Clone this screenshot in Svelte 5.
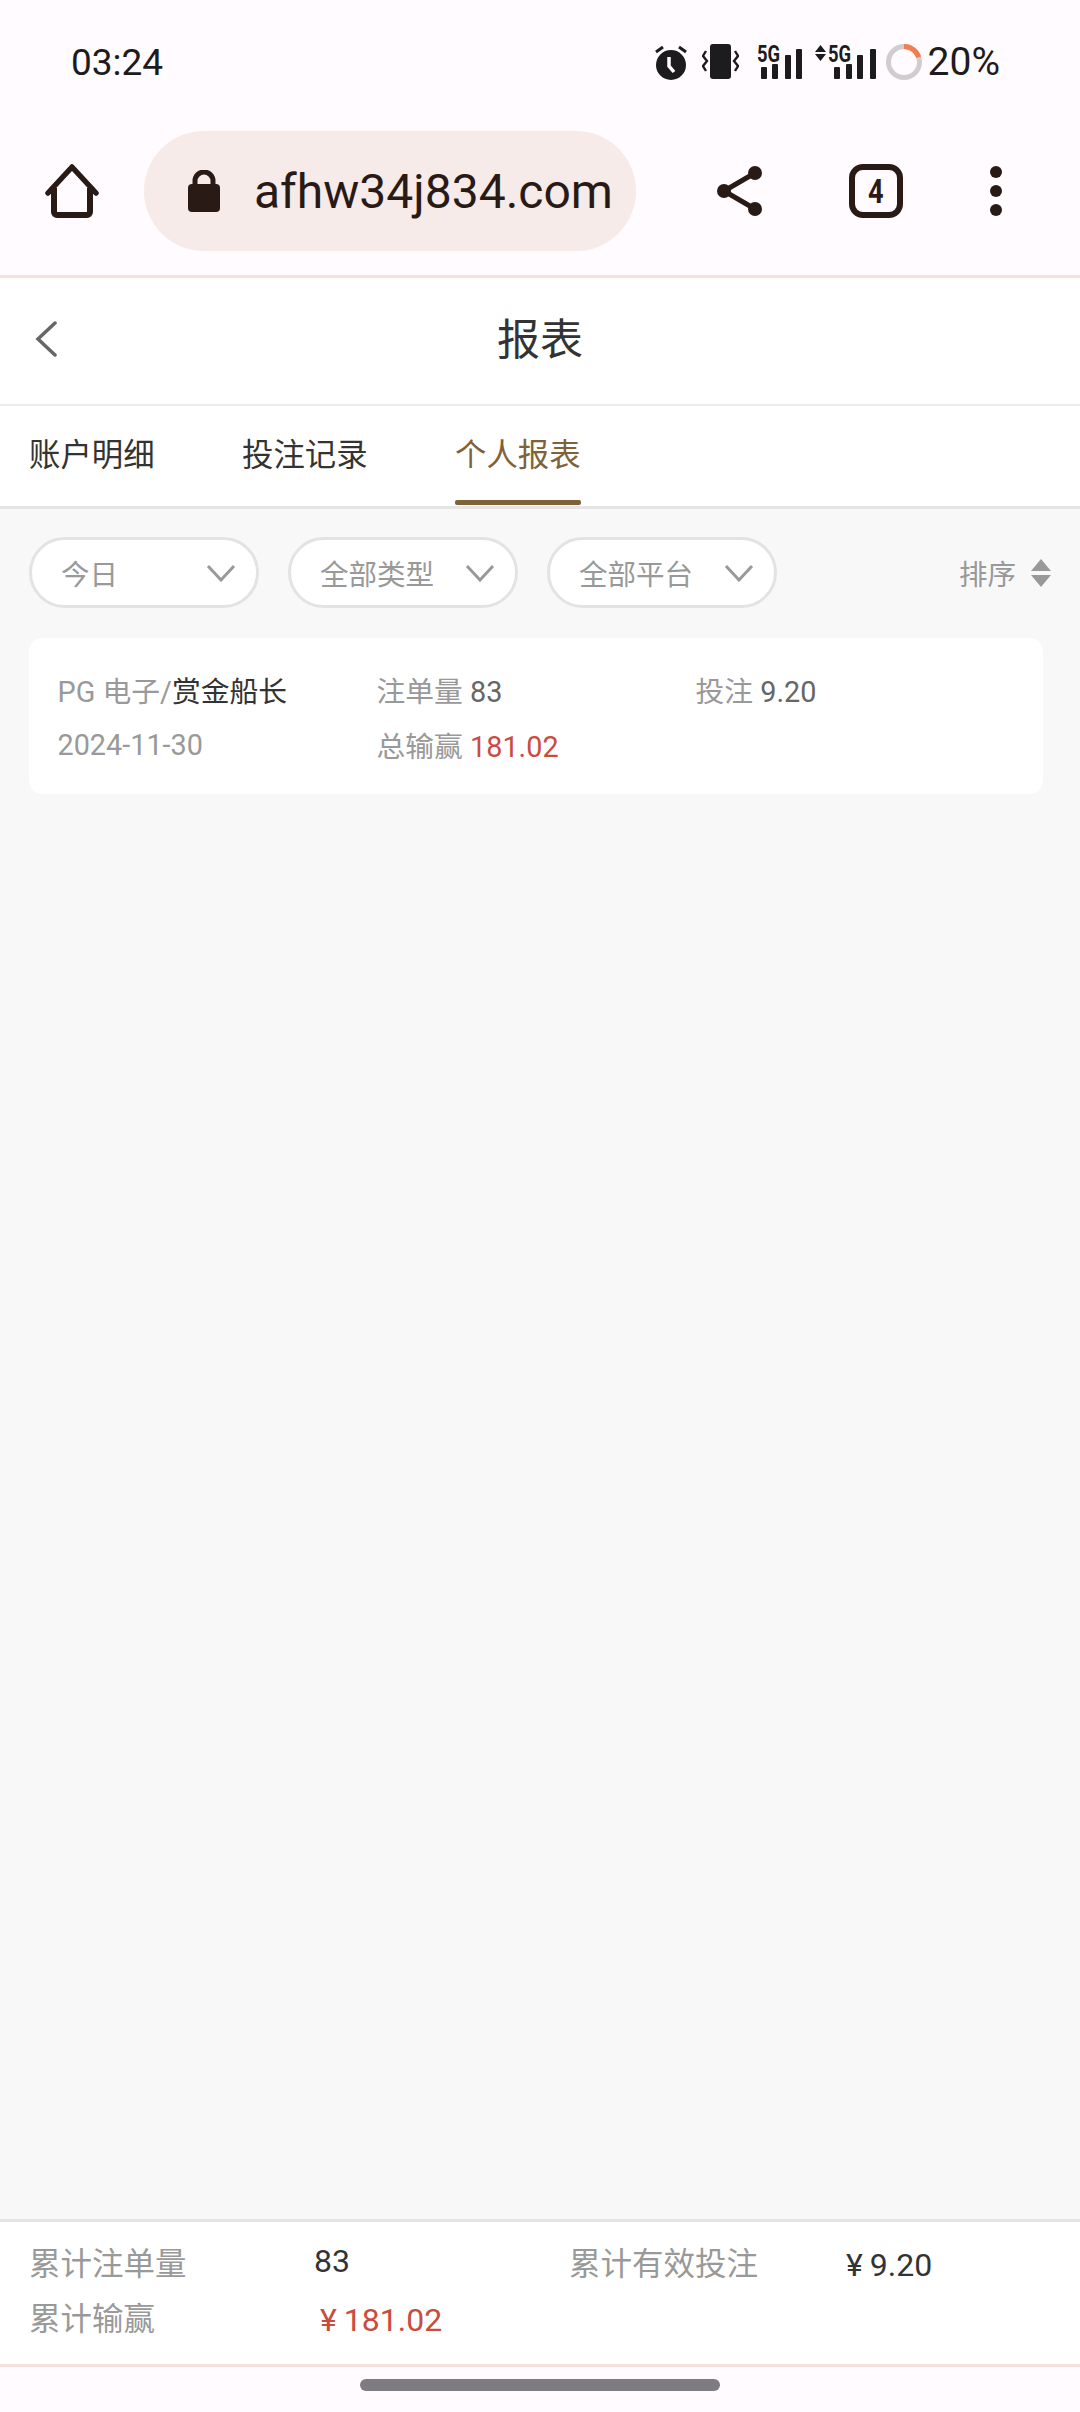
<script>
  const tabs = ["账户明细", "投注记录", "个人报表"];
  const filters = ["今日", "全部类型", "全部平台"];
</script>

<div class="page">
  <div class="chrome">
    <div class="status">
      <span class="time">03:24</span>
      <div class="status-icons">
        <svg class="alarm" width="34" height="36" viewBox="0 0 34 36">
          <circle cx="17" cy="21" r="15" fill="#1c1b1d" />
          <path d="M2 8 9 3M32 8 25 3" stroke="#1c1b1d" stroke-width="3" fill="none" />
          <path d="M15 13v9l5 6" stroke="#fffbfe" stroke-width="3.5" fill="none" />
        </svg>
        <svg class="vibrate" width="37" height="36" viewBox="0 0 37 36">
          <rect x="8" y="0" width="21" height="35" rx="3" fill="#1c1b1d" />
          <path d="M4 7 1 12l4 5-4 5 3 5M33 7l3 5-4 5 4 5-3 5" stroke="#1c1b1d" stroke-width="2.4" fill="none" />
        </svg>
        <div class="signal first">
          <span class="five-g">5G</span>
          <svg width="46" height="32" viewBox="0 0 46 32">
            <rect x="4" y="20" width="6" height="12" rx="1" fill="#1c1b1d" />
            <rect x="15" y="17" width="6" height="15" rx="1" fill="#1c1b1d" />
            <rect x="28" y="8" width="6" height="24" rx="1" fill="#1c1b1d" />
            <rect x="39" y="2" width="6" height="30" rx="1" fill="#1c1b1d" />
          </svg>
        </div>
        <div class="signal second">
          <svg class="updown" width="11" height="16" viewBox="0 0 11 16">
            <path d="M5.500 0 11 7H0zM0 9h11l-5.500 7z" fill="#1c1b1d" />
          </svg>
          <span class="five-g">5G</span>
          <svg width="46" height="32" viewBox="0 0 46 32">
            <rect x="4" y="20" width="6" height="12" rx="1" fill="#1c1b1d" />
            <rect x="16" y="17" width="6" height="15" rx="1" fill="#1c1b1d" />
            <rect x="27" y="8" width="6" height="24" rx="1" fill="#1c1b1d" />
            <rect x="40" y="2" width="6" height="30" rx="1" fill="#1c1b1d" />
          </svg>
        </div>
        <svg class="ring" width="36" height="36" viewBox="0 0 36 36">
          <circle cx="18" cy="18" r="15.500" fill="none" stroke="#cfcdcf" stroke-width="5" />
          <path d="M18 2.500A15.500 15.500 0 0 1 32.700 13.200" fill="none" stroke="#f47c50" stroke-width="5" />
        </svg>
        <span class="pct">20%</span>
      </div>
    </div>
    <div class="toolbar">
      <svg class="home" width="54" height="54" viewBox="0 0 54 54">
        <path d="M3 29 27 3l24 26" fill="none" stroke="#2a1a16" stroke-width="5.500" stroke-linecap="round" stroke-linejoin="round" />
        <path d="M9 24v24a3 3 0 0 0 3 3h30a3 3 0 0 0 3-3V24" fill="none" stroke="#2a1a16" stroke-width="6" />
      </svg>
      <div class="url">
        <svg width="32" height="42" viewBox="0 0 32 42">
          <rect x="0" y="14" width="32" height="28" rx="4" fill="#2a1a16" />
          <path d="M7 16V11a9 9 0 0 1 18 0v5" fill="none" stroke="#2a1a16" stroke-width="5" />
        </svg>
        <span>afhw34j834.com</span>
      </div>
      <svg class="share" width="46" height="50" viewBox="0 0 46 50">
        <path d="M38 7 7 25l31 18" fill="none" stroke="#2a1a16" stroke-width="5" />
        <circle cx="38" cy="7" r="7" fill="#2a1a16" />
        <circle cx="7" cy="25" r="7" fill="#2a1a16" />
        <circle cx="38" cy="43" r="7" fill="#2a1a16" />
      </svg>
      <div class="tab-count"><span>4</span></div>
      <svg class="dots" width="12" height="50" viewBox="0 0 12 50">
        <circle cx="6" cy="6" r="6" fill="#2a1a16" />
        <circle cx="6" cy="25" r="6" fill="#2a1a16" />
        <circle cx="6" cy="44" r="6" fill="#2a1a16" />
      </svg>
    </div>
  </div>

  <header class="title-bar">
    <svg class="back" width="22" height="36" viewBox="0 0 22 36">
      <path d="M20 2 3 18l17 16" fill="none" stroke="#666" stroke-width="3.500" stroke-linecap="round" />
    </svg>
    <h1>报表</h1>
  </header>

  <nav class="tabs">
    {#each tabs as tab, i}
      <div class="tab" class:active={i === 2}>{tab}</div>
    {/each}
  </nav>

  <main>
    <div class="filters">
      {#each filters as filter}
        <div class="filter">
          <span>{filter}</span>
          <svg width="30" height="18" viewBox="0 0 30 18">
            <path d="M2 2 15 16 28 2" fill="none" stroke="#999" stroke-width="3" />
          </svg>
        </div>
      {/each}
      <div class="sort">
        <span>排序</span>
        <svg width="20" height="28" viewBox="0 0 20 28">
          <path d="M10 0 20 12H0zM0 16h20L10 28z" fill="#999" />
        </svg>
      </div>
    </div>

    <div class="card">
      <div class="cell">PG 电子/<b>赏金船长</b></div>
      <div class="cell">注单量 <em>83</em></div>
      <div class="cell">投注 <em>9.20</em></div>
      <div class="cell">2024-11-30</div>
      <div class="cell">总输赢 <em class="red">181.02</em></div>
    </div>
  </main>

  <footer>
    <div class="totals">
      <span class="label">累计注单量</span>
      <span class="value count">83</span>
      <span class="label">累计有效投注</span>
      <span class="value"><i>¥</i>9.20</span>
      <span class="label">累计输赢</span>
      <span class="value red"><i>¥</i>181.02</span>
    </div>
  </footer>

  <div class="gesture"><div class="handle"></div></div>
</div>

<style>
  :global(body) {
    margin: 0;
  }

  .page {
    width: 1080px;
    height: 2412px;
    display: flex;
    flex-direction: column;
    background: #f8f8f8;
    font-family: Roboto, "Noto Sans CJK SC", sans-serif;
  }

  .chrome {
    background: #fffbfe;
    border-bottom: 3px solid #f6e0dc;
    height: 275px;
  }

  .status {
    height: 124px;
    display: flex;
    align-items: center;
    justify-content: space-between;
    padding: 0 80px 0 71px;
    color: #1c1b1d;
  }

  .time {
    font-size: 37px;
  }

  .status-icons {
    display: flex;
    align-items: center;
  }

  .alarm {
    margin-right: 14px;
  }

  .vibrate {
    margin-right: 18px;
  }

  .signal {
    position: relative;
    display: flex;
    align-items: flex-end;
    height: 34px;
  }

  .signal.first {
    width: 46px;
    margin-right: 12px;
  }

  .signal.second {
    width: 61px;
    margin-right: 10px;
    justify-content: flex-end;
  }

  .updown {
    position: absolute;
    left: 0;
    top: 0;
  }

  .five-g {
    position: absolute;
    top: -4px;
    left: 0;
    font-size: 23px;
    font-weight: 700;
    transform: scaleX(0.8);
    transform-origin: left;
  }

  .second .five-g {
    left: 13px;
  }

  .ring {
    margin-right: 6px;
  }

  .pct {
    font-size: 39px;
  }

  .toolbar {
    display: flex;
    align-items: center;
    height: 120px;
    margin-top: 7px;
    padding-left: 45px;
  }

  .url {
    width: 492px;
    height: 120px;
    box-sizing: border-box;
    margin-left: 45px;
    padding-left: 44px;
    border-radius: 60px;
    background: #f6ebe9;
    display: flex;
    align-items: center;
    gap: 34px;
    font-size: 48px;
    color: #2a1a16;
    white-space: nowrap;
  }

  .share {
    margin-left: 81px;
  }

  .tab-count {
    width: 54px;
    height: 54px;
    box-sizing: border-box;
    margin-left: 86px;
    border: 6px solid #2a1a16;
    border-radius: 14px;
    display: flex;
    align-items: center;
    justify-content: center;
    color: #2a1a16;
    font-size: 34px;
    font-weight: 700;
  }

  .tab-count span {
    transform: scaleX(0.8);
  }

  .dots {
    margin-left: 87px;
  }

  .title-bar {
    position: relative;
    height: 116px;
    padding-bottom: 10px;
    background: #fff;
    border-bottom: 2px solid #ececec;
    display: flex;
    align-items: center;
    justify-content: center;
  }

  .back {
    position: absolute;
    left: 35px;
    top: 43px;
  }

  h1 {
    margin: 0;
    font-size: 43px;
    font-weight: 400;
    color: #333;
  }

  .tabs {
    height: 100px;
    background: #fff;
    border-bottom: 3px solid #e5e5e5;
    display: flex;
    gap: 87.5px;
    padding-left: 29px;
  }

  .tab {
    position: relative;
    font-size: 31.4px;
    line-height: 100px;
    width: 125.5px;
    white-space: nowrap;
    color: #333;
  }

  .tab.active {
    color: #7f6238;
  }

  .tab.active::after {
    content: "";
    position: absolute;
    left: 0;
    right: 0;
    bottom: 1px;
    height: 5px;
    border-radius: 2px;
    background: #7f6238;
  }

  main {
    flex: 1;
    padding: 28px 30px 0 29px;
    min-height: 0;
  }

  .filters {
    display: flex;
    align-items: center;
    gap: 29px;
  }

  .filter {
    width: 230px;
    height: 71px;
    box-sizing: border-box;
    border: 3px solid #e3e3e3;
    border-radius: 36px;
    background: #fff;
    display: flex;
    align-items: center;
    justify-content: space-between;
    padding: 0 20px 0 29px;
    font-size: 28.5px;
    color: #999;
  }

  .sort {
    margin-left: auto;
    margin-right: -1px;
    display: flex;
    align-items: center;
    gap: 15px;
    font-size: 28.5px;
    color: #999;
  }

  .card {
    width: 1014px;
    height: 156px;
    box-sizing: border-box;
    margin-top: 30px;
    padding: 24px 0 0 28.5px;
    border-radius: 14px;
    background: #fff;
    display: grid;
    grid-template-columns: 319px 319px 1fr;
    grid-auto-rows: 55px;
    align-items: center;
    font-size: 28.8px;
    color: #999;
  }

  .cell b {
    font-weight: 400;
    color: #333;
  }

  .cell em {
    font-style: normal;
    color: #666;
  }

  em.red,
  .value.red {
    color: #c94c3f;
  }

  footer {
    height: 145px;
    box-sizing: border-box;
    background: #fff;
    border-top: 3px solid #e5e5e5;
    padding: 21px 0 0 29px;
  }

  .totals {
    display: grid;
    grid-template-columns: 285px 255px 277px 1fr;
    grid-auto-rows: 55px;
    font-size: 31.5px;
    line-height: 44px;
    color: #999;
  }

  .value {
    color: #333;
    font-size: 32px;
  }

  .value i {
    font-style: normal;
    margin-right: 7px;
  }

  .value.count {
    margin-top: -4px;
  }

  .value.red {
    margin-left: 6px;
  }

  .gesture {
    height: 33px;
    background: #fffbfe;
    border-top: 3px solid #f6e0dc;
    padding-top: 12px;
  }

  .handle {
    width: 360px;
    height: 12px;
    margin: 0 auto;
    border-radius: 6px;
    background: #7e7c80;
  }
</style>
